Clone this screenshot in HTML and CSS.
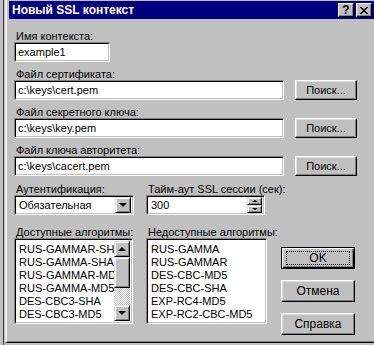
FILE: index.html
```html
<!DOCTYPE html>
<html lang="ru">
<head>
    <meta charset="UTF-8">
    <meta name="viewport" content="width=device-width, initial-scale=1.0">
    <title>Новый SSL контекст</title>
    <link rel="stylesheet" href="styles.css">
</head>
<body>
    <div class="desk">
        <div class="behind"></div>
        <div class="dialog">
            <div class="titlebar">
                <span class="title">Новый SSL контекст</span>
                <div class="caption-buttons">
                    <button class="cap-btn">?</button>
                    <button class="cap-btn">
                        <svg width="8" height="7" viewBox="0 0 8 7">
                            <path d="M0 0h2v1h1v1h2v-1h1v-1h2v1h-1v1h-1v1h-1v1h1v1h1v1h1v1h-2v-1h-1v-1h-2v1h-1v1h-2v-1h1v-1h1v-1h1v-1h-1v-1h-1v-1h-1z" fill="#000"/>
                        </svg>
                    </button>
                </div>
            </div>

            <div class="content">
                <div class="field">
                    <label class="label">Имя контекста:</label>
                    <div class="edit name">example1</div>
                </div>

                <div class="field">
                    <label class="label">Файл сертификата:</label>
                    <div class="file-row">
                        <div class="edit path">c:\keys\cert.pem</div>
                        <button class="btn browse">Поиск...</button>
                    </div>
                </div>

                <div class="field">
                    <label class="label">Файл секретного ключа:</label>
                    <div class="file-row">
                        <div class="edit path">c:\keys\key.pem</div>
                        <button class="btn browse">Поиск...</button>
                    </div>
                </div>

                <div class="field">
                    <label class="label">Файл ключа авторитета:</label>
                    <div class="file-row">
                        <div class="edit path">c:\keys\cacert.pem</div>
                        <button class="btn browse">Поиск...</button>
                    </div>
                </div>

                <div class="options">
                    <div class="field col-left">
                        <label class="label">Аутентификация:</label>
                        <div class="combo">
                            <span class="combo-text">Обязательная</span>
                            <span class="arrow-btn combo-btn"><span class="tri-down"></span></span>
                        </div>
                    </div>
                    <div class="field col-right">
                        <label class="label">Тайм-аут SSL сессии (сек):</label>
                        <div class="spin">
                            <span class="spin-text">300</span>
                            <span class="spin-btns">
                                <span class="arrow-btn spin-btn"><span class="tri-up small"></span></span>
                                <span class="arrow-btn spin-btn"><span class="tri-down small"></span></span>
                            </span>
                        </div>
                    </div>
                </div>

                <div class="lower">
                    <div class="field col-left">
                        <label class="label">Доступные алгоритмы:</label>
                        <div class="listbox available">
                            <ul class="items">
                                <li>RUS-GAMMAR-SHA</li>
                                <li>RUS-GAMMA-SHA</li>
                                <li>RUS-GAMMAR-MD5</li>
                                <li>RUS-GAMMA-MD5</li>
                                <li>DES-CBC3-SHA</li>
                                <li>DES-CBC3-MD5</li>
                            </ul>
                            <div class="scrollbar">
                                <span class="arrow-btn scroll-btn"><span class="tri-up"></span></span>
                                <span class="thumb"></span>
                                <span class="track"></span>
                                <span class="arrow-btn scroll-btn"><span class="tri-down"></span></span>
                            </div>
                        </div>
                    </div>
                    <div class="field col-right">
                        <label class="label">Недоступные алгоритмы:</label>
                        <div class="listbox unavailable">
                            <ul class="items">
                                <li>RUS-GAMMA</li>
                                <li>RUS-GAMMAR</li>
                                <li>DES-CBC-MD5</li>
                                <li>DES-CBC-SHA</li>
                                <li>EXP-RC4-MD5</li>
                                <li>EXP-RC2-CBC-MD5</li>
                            </ul>
                        </div>
                    </div>
                    <div class="actions">
                        <button class="btn action default"><span class="focus">OK</span></button>
                        <button class="btn action">Отмена</button>
                        <button class="btn action">Справка</button>
                    </div>
                </div>
            </div>
        </div>
    </div>
</body>
</html>
```

FILE: styles.css
```css
body {
    margin: 0;
    background-color: #c0c0c0;
    font-family: "Liberation Sans", Arial, sans-serif;
    font-size: 11px;
    color: #000;
    overflow: hidden;
}

.desk {
    display: flex;
    width: 374px;
    height: 345px;
    overflow: hidden;
}

.behind {
    width: 3px;
    flex-shrink: 0;
    border-right: 1px solid #404040;
    background-color: #c0c0c0;
}

.dialog {
    flex-shrink: 0;
    width: 372px;
    height: 345px;
    margin-top: -2px;
    margin-left: 1px;
    padding: 2px;
    box-sizing: border-box;
    background-color: #c0c0c0;
    border: 1px solid;
    border-color: #dfdfdf #000 #000 #dfdfdf;
    box-shadow: inset 1px 1px #fff, inset -1px -1px #808080;
    display: flex;
    flex-direction: column;
}

.titlebar {
    height: 18px;
    margin-left: 1px;
    background-color: #000080;
    color: #fff;
    display: flex;
    align-items: center;
    justify-content: space-between;
    padding: 0 2px 0 3px;
}

.title {
    font-weight: bold;
    font-size: 12px;
}

.caption-buttons {
    display: flex;
    gap: 2px;
}

.cap-btn {
    width: 16px;
    height: 14px;
    padding: 0;
    background-color: #c0c0c0;
    border: 1px solid;
    border-color: #fff #000 #000 #fff;
    box-shadow: inset -1px -1px #808080;
    font-family: "Liberation Sans", Arial, sans-serif;
    font-weight: bold;
    font-size: 12px;
    line-height: 12px;
    color: #000;
    display: flex;
    align-items: center;
    justify-content: center;
}

.content {
    padding: 11px 0 0 6px;
}

.field {
    display: flex;
    flex-direction: column;
    margin-bottom: 6px;
}

.label {
    height: 12px;
    line-height: 12px;
    padding-left: 2px;
    white-space: nowrap;
}

/* sunken white fields */
.edit,
.combo,
.spin,
.listbox {
    box-sizing: border-box;
    background-color: #fff;
    border: 1px solid;
    border-color: #808080 #fff #fff #808080;
    box-shadow: inset 1px 1px #000, inset -1px -1px #c0c0c0;
}

.edit {
    height: 20px;
    line-height: 18px;
    padding-left: 3px;
}

.name {
    width: 96px;
}

.file-row {
    display: flex;
    align-items: flex-start;
}

.path {
    width: 270px;
}

.btn {
    box-sizing: border-box;
    padding: 0;
    background-color: #c0c0c0;
    border: 1px solid;
    border-color: #fff #000 #000 #fff;
    box-shadow: inset -1px -1px #808080, inset 1px 1px #dfdfdf;
    font-family: "Liberation Sans", Arial, sans-serif;
    font-size: 11px;
    color: #000;
}

.browse {
    width: 62px;
    height: 20px;
    margin-left: 11px;
}

.options {
    display: flex;
    margin-top: 7px;
}

.col-left {
    width: 132px;
    flex-shrink: 0;
}

.col-right {
    width: 124px;
    flex-shrink: 0;
}

.combo,
.spin {
    height: 20px;
    display: flex;
    align-items: center;
    justify-content: space-between;
    padding: 2px;
}

.combo {
    width: 120px;
}

.spin {
    width: 119px;
}

.combo-text,
.spin-text {
    padding-left: 2px;
}

.arrow-btn {
    box-sizing: border-box;
    background-color: #c0c0c0;
    border: 1px solid;
    border-color: #dfdfdf #000 #000 #dfdfdf;
    box-shadow: inset 1px 1px #fff, inset -1px -1px #808080;
    display: flex;
    align-items: center;
    justify-content: center;
}

.combo-btn {
    width: 16px;
    height: 16px;
}

.spin-btns {
    display: flex;
    flex-direction: column;
}

.spin-btn {
    width: 15px;
    height: 8px;
}

.tri-down,
.tri-up {
    width: 0;
    height: 0;
    border-left: 4px solid transparent;
    border-right: 4px solid transparent;
}

.tri-down {
    border-top: 4px solid #000;
}

.tri-up {
    border-bottom: 4px solid #000;
}

.tri-down.small,
.tri-up.small {
    border-left-width: 3px;
    border-right-width: 3px;
}

.tri-down.small {
    border-top-width: 2px;
}

.tri-up.small {
    border-bottom-width: 2px;
}

.lower {
    display: flex;
    align-items: flex-start;
    margin-top: 5px;
}

.listbox {
    height: 86px;
    display: flex;
    padding: 2px;
    overflow: hidden;
}

.available {
    width: 119px;
}

.unavailable {
    width: 121px;
}

.items {
    list-style: none;
    margin: 0;
    padding: 2px 0 0 2px;
    flex: 1;
    overflow: hidden;
    white-space: nowrap;
}

.items li {
    height: 13px;
    line-height: 13px;
}

.scrollbar {
    width: 16px;
    flex-shrink: 0;
    display: flex;
    flex-direction: column;
}

.scroll-btn {
    height: 16px;
}

.thumb {
    height: 31px;
    box-sizing: border-box;
    background-color: #c0c0c0;
    border: 1px solid;
    border-color: #dfdfdf #000 #000 #dfdfdf;
    box-shadow: inset 1px 1px #fff, inset -1px -1px #808080;
}

.track {
    flex: 1;
    background-image: repeating-conic-gradient(#fff 0 25%, #c0c0c0 0 50%);
    background-size: 2px 2px;
}

.actions {
    display: flex;
    flex-direction: column;
    gap: 11px;
    margin-left: 11px;
    margin-top: 21px;
}

.action {
    width: 74px;
    height: 22px;
    font-size: 12px;
}

.default {
    border: 1px solid #000;
    box-shadow: inset 1px 1px #fff, inset -1px -1px #000, inset -2px -2px #808080;
    padding: 3px 4px;
}

.focus {
    display: block;
    height: 100%;
    box-sizing: border-box;
    border: 1px dotted #000;
    line-height: 13px;
}
```
